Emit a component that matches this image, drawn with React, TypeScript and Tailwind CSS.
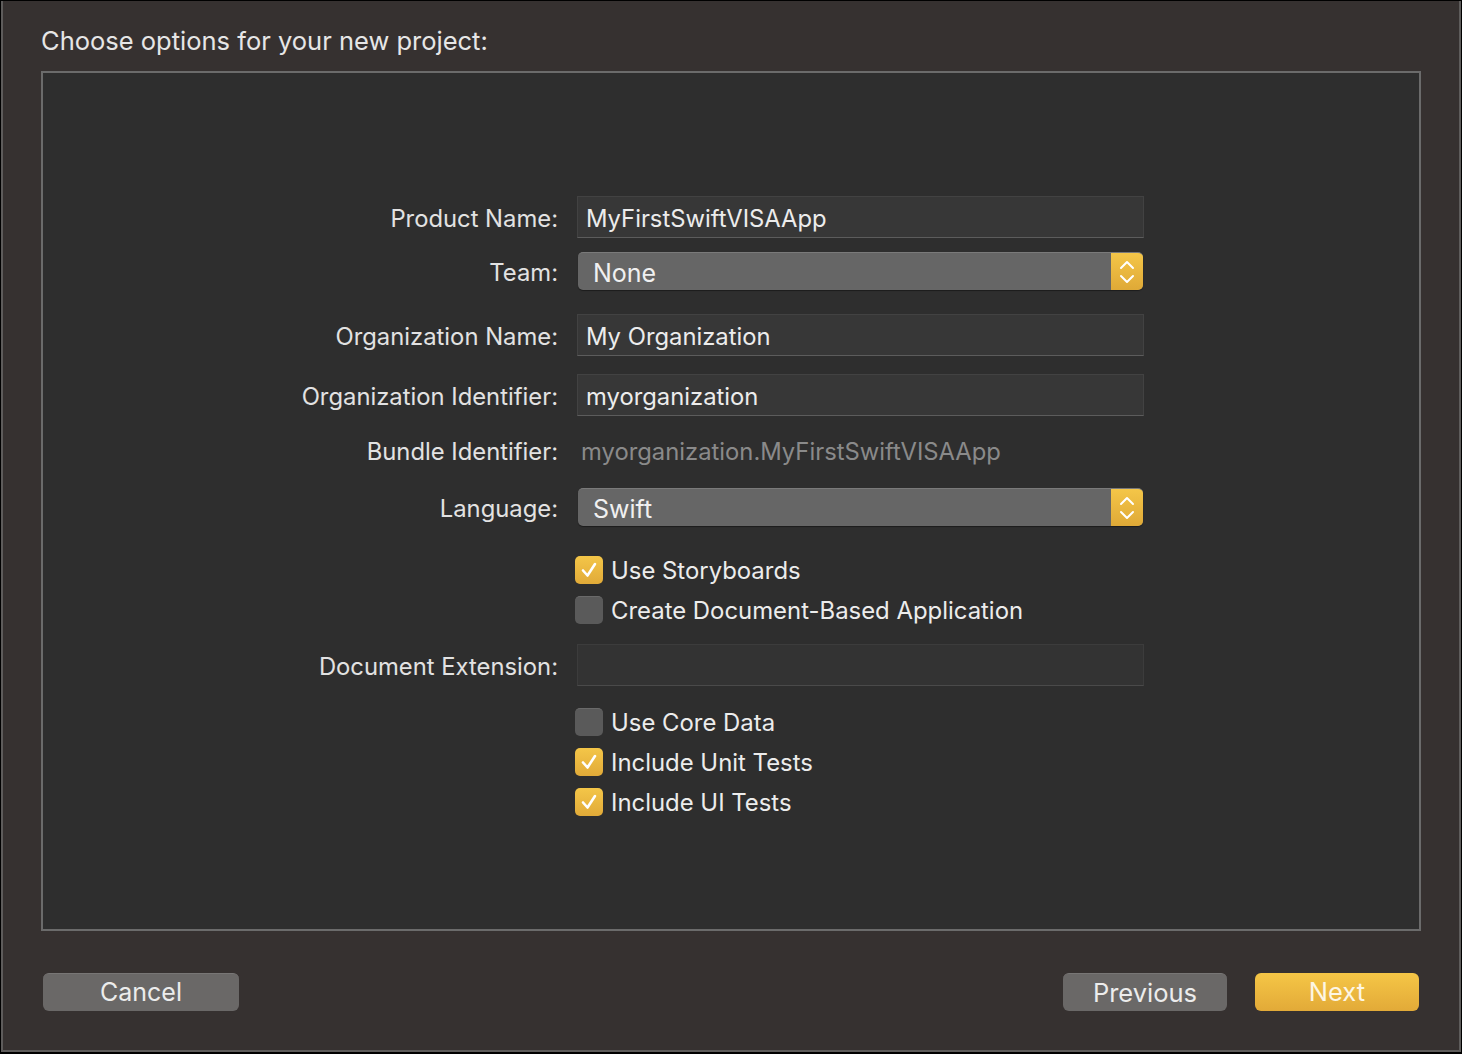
import React from "react";

const FONT = { fontFamily: "Inter, 'Noto Sans', sans-serif" };

const Label = ({ children }: { children: React.ReactNode }) => (
  <div className="w-[534px] shrink-0 pr-[19px] pt-[3px] leading-[30px] text-right text-[23.8px] text-[#e2e2e2]">
    {children}
  </div>
);

const TextField = ({ value }: { value?: string }) => (
  <div className="flex items-center h-[42px] w-[567px] bg-[#373737] border border-[#424242] border-b-[#5c5c5c] px-[8px] pt-[3px] leading-[30px] text-[23.8px] text-[#ececec]">
    {value}
  </div>
);

const Chevrons = () => (
  <svg width="18" height="30" viewBox="0 0 18 30" fill="none">
    <path d="M3 11 L9 5 L15 11" stroke="#fff" strokeWidth="2" strokeLinecap="round" strokeLinejoin="round" />
    <path d="M3 19 L9 25 L15 19" stroke="#fff" strokeWidth="2" strokeLinecap="round" strokeLinejoin="round" />
  </svg>
);

const Popup = ({ value }: { value: string }) => (
  <div className="flex h-[38px] w-[565px] ml-[1px] rounded-[5px] overflow-hidden bg-[#666666] border-t border-[#7a7a7a] shadow-[0_1px_1px_rgba(0,0,0,0.4)]">
    <div className="flex-1 flex items-center pl-[15px] pt-[2px] leading-[30px] text-[25px] text-[#f0f0f0]">{value}</div>
    <div className="w-[32px] flex items-center justify-center bg-gradient-to-b from-[#f4c648] to-[#dfa937]">
      <Chevrons />
    </div>
  </div>
);

const Check = ({ checked, label }: { checked: boolean; label: string }) => (
  <div className="flex items-center h-[28px] ml-[-2px]">
    {checked ? (
      <div className="w-[28px] h-[28px] rounded-[5px] bg-gradient-to-b from-[#f4c648] to-[#e1aa38] flex items-center justify-center">
        <svg width="20" height="20" viewBox="0 0 20 20" fill="none">
          <path d="M4 10.5 L8.5 15.5 L16 4" stroke="#fff" strokeWidth="2.6" strokeLinecap="round" strokeLinejoin="round" />
        </svg>
      </div>
    ) : (
      <div className="w-[28px] h-[28px] rounded-[5px] bg-[#5a5a5a] border-t border-[#6a6a6a]" />
    )}
    <span className="ml-[8px] pt-[2px] leading-[24px] text-[23.9px] text-[#ececec]">{label}</span>
  </div>
);

const Row = ({
  label,
  className = "",
  children,
}: {
  label?: string;
  className?: string;
  children: React.ReactNode;
}) => (
  <div className={`flex items-center ${className}`}>
    <Label>{label}</Label>
    {children}
  </div>
);

export default function App() {
  return (
    <div className="w-[1462px] h-[1054px] bg-black pt-[1px] px-[1px] pb-[2px]" style={FONT}>
      <div className="h-full bg-[#363130] border-l-2 border-r-2 border-b-2 border-[#5e5c5b] flex flex-col">
        <div className="pl-[38px] pt-[21px] h-[70px] text-[25.5px] text-[#e6e6e6]">
          Choose options for your new project:
        </div>

        <div className="ml-[38px] w-[1380px] h-[860px] border-2 border-[#6b6b6b] bg-[#2e2e2e] pt-[123px] flex flex-col">
          <Row label="Product Name:">
            <TextField value="MyFirstSwiftVISAApp" />
          </Row>
          <Row label="Team:" className="mt-[14px]">
            <Popup value="None" />
          </Row>
          <Row label="Organization Name:" className="mt-[24px]">
            <TextField value="My Organization" />
          </Row>
          <Row label="Organization Identifier:" className="mt-[18px]">
            <TextField value="myorganization" />
          </Row>
          <Row label="Bundle Identifier:" className="mt-[14px] h-[40px]">
            <div className="pl-[4px] pt-[3px] leading-[30px] text-[23.8px] text-[#8a8a8a]">myorganization.MyFirstSwiftVISAApp</div>
          </Row>
          <Row label="Language:" className="mt-[18px]">
            <Popup value="Swift" />
          </Row>
          <Row className="mt-[30px]">
            <Check checked label="Use Storyboards" />
          </Row>
          <Row className="mt-[12px]">
            <Check checked={false} label="Create Document-Based Application" />
          </Row>
          <Row label="Document Extension:" className="mt-[20px]">
            <div className="h-[42px] w-[567px] bg-[#333333] border border-[#3c3c3c] border-b-[#4a4a4a]" />
          </Row>
          <Row className="mt-[22px]">
            <Check checked={false} label="Use Core Data" />
          </Row>
          <Row className="mt-[12px]">
            <Check checked label="Include Unit Tests" />
          </Row>
          <Row className="mt-[12px]">
            <Check checked label="Include UI Tests" />
          </Row>
        </div>

        <div className="flex items-center pt-[42px] pl-[40px] pr-[40px]">
          <button className="w-[196px] h-[38px] rounded-[6px] bg-[#6a6867] border-t border-[#787675] text-[25px] text-[#ececec]">
            Cancel
          </button>
          <div className="flex-1" />
          <button className="w-[164px] h-[38px] rounded-[6px] bg-[#6a6867] border-t border-[#787675] text-[25.5px] text-[#ececec]">
            Previous
          </button>
          <button className="ml-[28px] w-[164px] h-[38px] rounded-[6px] bg-gradient-to-b from-[#f5c646] to-[#e2aa38] text-[25.5px] text-[#fdf6e4]">
            Next
          </button>
        </div>
      </div>
    </div>
  );
}
